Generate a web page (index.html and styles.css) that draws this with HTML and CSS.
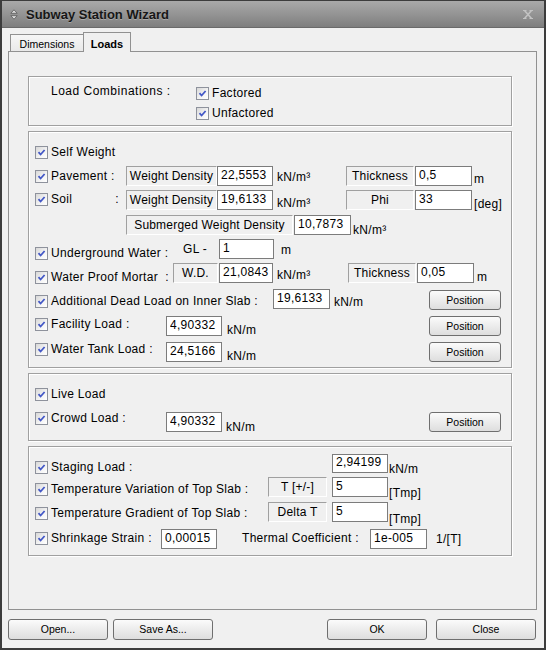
FILE: index.html
```html
<!DOCTYPE html>
<html>
<head>
<meta charset="utf-8">
<title>Subway Station Wizard</title>
<link rel="stylesheet" href="styles.css">
</head>
<body>
<div class="window">
  <div class="titlebar">
    <svg class="ticon" viewBox="0 0 8 11" width="8" height="11"><path d="M4 0.8 L7.2 4.3 H0.8 Z M4 10.2 L7.2 6.7 H0.8 Z" fill="#dcdcdc" stroke="#5a5a5a" stroke-width="0.8"/></svg>
    <span class="ttext">Subway Station Wizard</span>
    <svg class="tclose" viewBox="0 0 12 11" width="12" height="11"><path d="M2.5 1.5 L9.5 9.5 M9.5 1.5 L2.5 9.5" stroke="#c2c2c2" stroke-width="1.6"/><path d="M1 1.5 H4.5 M7.5 1.5 H11 M1 9.5 H4.5 M7.5 9.5 H11" stroke="#c2c2c2" stroke-width="1"/></svg>
  </div>

  <div class="tabs">
    <div class="tab">Dimensions</div>
    <div class="tab active">Loads</div>
  </div>

  <div class="panel">
    <div class="group g1">
      <div class="lc-label">Load Combinations :</div>
      <div class="lc-checks">
        <label class="cb"><span class="cbx"><svg viewBox="0 0 9 9"><path d="M1.5 4.2 L3.6 6.5 L7.6 2"/></svg></span>Factored</label>
        <label class="cb"><span class="cbx"><svg viewBox="0 0 9 9"><path d="M1.5 4.2 L3.6 6.5 L7.6 2"/></svg></span>Unfactored</label>
      </div>
    </div>

    <div class="group g2">
      <div class="row h20">
        <label class="cb"><span class="cbx"><svg viewBox="0 0 9 9"><path d="M1.5 4.2 L3.6 6.5 L7.6 2"/></svg></span>Self Weight</label>
      </div>
      <div class="row h24">
        <label class="cb t4 w91"><span class="cbx"><svg viewBox="0 0 9 9"><path d="M1.5 4.2 L3.6 6.5 L7.6 2"/></svg></span>Pavement :</label>
        <span class="lbox w91">Weight Density</span>
        <input class="field w56" value="22,5553" readonly>
        <span class="unit ml4 w69 t4">kN/m³</span>
        <span class="lbox w68">Thickness</span>
        <input class="field ml1 w57" value="0,5" readonly>
        <span class="unit ml2 t6">m</span>
      </div>
      <div class="row h25">
        <label class="cb t3 w91"><span class="cbx"><svg viewBox="0 0 9 9"><path d="M1.5 4.2 L3.6 6.5 L7.6 2"/></svg></span>Soil<span class="soil-colon">:</span></label>
        <span class="lbox w91">Weight Density</span>
        <input class="field w56" value="19,6133" readonly>
        <span class="unit ml4 w69 t6">kN/m³</span>
        <span class="lbox w68">Phi</span>
        <input class="field ml1 w57" value="33" readonly>
        <span class="unit ml2 t7">[deg]</span>
      </div>
      <div class="row h24">
        <span class="lbox ml91 w167">Submerged Weight Density</span>
        <input class="field ml1 w57" value="10,7873" readonly>
        <span class="unit ml2 t8">kN/m³</span>
      </div>
      <div class="row h24">
        <label class="cb t8 w148"><span class="cbx"><svg viewBox="0 0 9 9"><path d="M1.5 4.2 L3.6 6.5 L7.6 2"/></svg></span>Underground Water :</label>
        <span class="unit w36 t3">GL -</span>
        <input class="field w55" value="1" readonly>
        <span class="unit ml7 t4">m</span>
      </div>
      <div class="row h26">
        <label class="cb t8 w138"><span class="cbx"><svg viewBox="0 0 9 9"><path d="M1.5 4.2 L3.6 6.5 L7.6 2"/></svg></span>Water Proof Mortar&nbsp;&nbsp;:</label>
        <span class="lbox w45">W.D.</span>
        <input class="field ml1 w54" value="21,0843" readonly>
        <span class="unit ml4 w71 t5">kN/m³</span>
        <span class="lbox w68">Thickness</span>
        <input class="field ml1 w57" value="0,05" readonly>
        <span class="unit ml3 t7">m</span>
      </div>
      <div class="row h27">
        <label class="cb t6 w238"><span class="cbx"><svg viewBox="0 0 9 9"><path d="M1.5 4.2 L3.6 6.5 L7.6 2"/></svg></span>Additional Dead Load on Inner Slab :</label>
        <input class="field w57" value="19,6133" readonly>
        <span class="unit ml4 t6">kN/m</span>
        <button class="btn pos t1">Position</button>
      </div>
      <div class="row h26">
        <label class="cb t2 w131"><span class="cbx"><svg viewBox="0 0 9 9"><path d="M1.5 4.2 L3.6 6.5 L7.6 2"/></svg></span>Facility Load :</label>
        <input class="field w56" value="4,90332" readonly>
        <span class="unit ml5 t7">kN/m</span>
        <button class="btn pos">Position</button>
      </div>
      <div class="row h20">
        <label class="cb t1 w131"><span class="cbx"><svg viewBox="0 0 9 9"><path d="M1.5 4.2 L3.6 6.5 L7.6 2"/></svg></span>Water Tank Load :</label>
        <input class="field w56" value="24,5166" readonly>
        <span class="unit ml5 t7">kN/m</span>
        <button class="btn pos">Position</button>
      </div>
    </div>

    <div class="group g3">
      <div class="row h24">
        <label class="cb"><span class="cbx"><svg viewBox="0 0 9 9"><path d="M1.5 4.2 L3.6 6.5 L7.6 2"/></svg></span>Live Load</label>
      </div>
      <div class="row h20">
        <label class="cb w131"><span class="cbx"><svg viewBox="0 0 9 9"><path d="M1.5 4.2 L3.6 6.5 L7.6 2"/></svg></span>Crowd Load :</label>
        <input class="field w56" value="4,90332" readonly>
        <span class="unit ml4 t8">kN/m</span>
        <button class="btn pos">Position</button>
      </div>
    </div>

    <div class="group g4">
      <div class="row h23">
        <label class="cb t7 w297"><span class="cbx"><svg viewBox="0 0 9 9"><path d="M1.5 4.2 L3.6 6.5 L7.6 2"/></svg></span>Staging Load :</label>
        <input class="field w56 short" value="2,94199" readonly>
        <span class="unit ml1 t8">kN/m</span>
      </div>
      <div class="row h25">
        <label class="cb t6 w233"><span class="cbx"><svg viewBox="0 0 9 9"><path d="M1.5 4.2 L3.6 6.5 L7.6 2"/></svg></span>Temperature Variation of Top Slab :</label>
        <span class="lbox w59">T [+/-]</span>
        <input class="field ml5 w56" value="5" readonly>
        <span class="unit ml1 t9">[Tmp]</span>
      </div>
      <div class="row h27">
        <label class="cb t5 w233"><span class="cbx"><svg viewBox="0 0 9 9"><path d="M1.5 4.2 L3.6 6.5 L7.6 2"/></svg></span>Temperature Gradient of Top Slab :</label>
        <span class="lbox w59">Delta T</span>
        <input class="field ml5 w56" value="5" readonly>
        <span class="unit ml1 t10">[Tmp]</span>
      </div>
      <div class="row h20">
        <label class="cb t3 w126"><span class="cbx"><svg viewBox="0 0 9 9"><path d="M1.5 4.2 L3.6 6.5 L7.6 2"/></svg></span>Shrinkage Strain :</label>
        <input class="field w56" value="0,00015" readonly>
        <span class="unit ml25 w128 t2">Thermal Coefficient :</span>
        <input class="field w57" value="1e-005" readonly>
        <span class="unit ml9 t3">1/[T]</span>
      </div>
    </div>
  </div>

  <div class="footer">
    <button class="btn big">Open...</button>
    <button class="btn big ml5">Save As...</button>
    <button class="btn big ok">OK</button>
    <button class="btn big ml9">Close</button>
  </div>
</div>
</body>
</html>
```

FILE: styles.css
```css
html, body {
  margin: 0;
  padding: 0;
  background: #f0f0f0;
}

.window {
  width: 546px;
  height: 650px;
  box-sizing: border-box;
  border: 2px solid #3c3c3c;
  border-top-width: 1px;
  background: #f0f0f0;
  display: flex;
  flex-direction: column;
  font-family: "Liberation Sans", Arial, sans-serif;
  font-size: 12px;
  color: #000;
  overflow: hidden;
}

/* title bar */
.titlebar {
  height: 27px;
  flex: none;
  display: flex;
  align-items: center;
  padding: 0 10px 0 8px;
  background: linear-gradient(#a9a9a9, #929292 55%, #7e7e7e);
  border-bottom: 1px solid #6a6a6a;
  box-sizing: border-box;
}
.ticon { flex: none; }
.ttext {
  margin-left: 8px;
  font-weight: bold;
  font-size: 13px;
  color: #161616;
  text-shadow: 0 1px 0 rgba(255,255,255,0.25);
}
.tclose { margin-left: auto; flex: none; }

/* tabs */
.tabs {
  flex: none;
  display: flex;
  align-items: flex-end;
  padding: 4px 0 0 8px;
}
.tab {
  height: 17px;
  width: 74px;
  box-sizing: border-box;
  border: 1px solid #919191;
  border-bottom: none;
  background: linear-gradient(#f6f6f6, #e9e9e9);
  font-size: 10.5px;
  display: flex;
  justify-content: center;
  padding-top: 3px;
  line-height: 13px;
}
.tab.active {
  height: 20px;
  width: 48px;
  margin-left: -1px;
  margin-bottom: -1px;
  padding-top: 5px;
  background: #f0f0f0;
  font-weight: bold;
  font-size: 11px;
  position: relative;
  z-index: 1;
}

/* panel */
.panel {
  flex: none;
  margin-left: 6px;
  width: 529px;
  height: 559px;
  box-sizing: border-box;
  border: 1px solid #919191;
  padding: 24px 0 0 19px;
  display: flex;
  flex-direction: column;
  gap: 5px;
}

.group {
  width: 484px;
  box-sizing: border-box;
  border: 1px solid #a0a0a0;
  box-shadow: 1px 1px 0 #ffffff, inset 1px 1px 0 #ffffff;
}

.g1 {
  display: flex;
  align-items: flex-start;
  padding: 7px 0 5px 22px;
}
.lc-label {
  width: 145px;
  line-height: 14px;
  flex: none;
  letter-spacing: 0.5px;
}
.lc-checks {
  margin-top: 3px;
  display: flex;
  flex-direction: column;
  gap: 7px;
}

.g2 { padding: 14px 10px 5px 6px; }
.g3 { padding: 14px 10px 8px 6px; }
.g4 { padding: 7px 10px 6px 6px; }

.row {
  display: flex;
  align-items: flex-start;
}

/* checkbox */
.cb {
  display: flex;
  align-items: center;
  gap: 3px;
  height: 13px;
  line-height: 13px;
  flex: none;
  white-space: nowrap;
  letter-spacing: 0.3px;
}
.cbx {
  width: 13px;
  height: 13px;
  box-sizing: border-box;
  border: 1px solid #8e929c;
  background: linear-gradient(135deg, #d8d8d8, #f4f4f4 60%, #ffffff);
  display: flex;
  align-items: center;
  justify-content: center;
  flex: none;
}
.cbx svg {
  width: 9px;
  height: 9px;
}
.cbx path {
  fill: none;
  stroke: #4257c6;
  stroke-width: 1.8;
}
.soil-colon { margin-left: 40px; }

/* static label boxes */
.lbox {
  flex: none;
  height: 20px;
  box-sizing: border-box;
  border: 1px solid;
  border-color: #a0a0a0 #ffffff #ffffff #a0a0a0;
  display: flex;
  align-items: center;
  justify-content: center;
  white-space: nowrap;
  letter-spacing: 0.2px;
}

/* edit fields */
.field {
  flex: none;
  height: 20px;
  box-sizing: border-box;
  margin: 0;
  border: 1px solid #7c7c7c;
  border-radius: 0;
  background: #ffffff;
  padding: 0 2px 3px 3px;
  font-family: "Liberation Sans", Arial, sans-serif;
  font-size: 12px;
  letter-spacing: 0.3px;
  color: #000;
  outline: none;
}
.field.short { height: 19px; }

.unit {
  flex: none;
  line-height: 14px;
  white-space: nowrap;
  letter-spacing: 0.3px;
}

/* buttons */
.btn {
  flex: none;
  margin: 0;
  height: 21px;
  box-sizing: border-box;
  border: 1px solid #6f6f6f;
  border-radius: 3px;
  background: linear-gradient(#fbfbfb, #ececec 50%, #dedede);
  font-family: "Liberation Sans", Arial, sans-serif;
  font-size: 10.5px;
  color: #000;
  padding: 0;
  line-height: 19px;
}
.btn.pos {
  width: 72px;
  height: 20px;
  margin-left: auto;
  line-height: 18px;
}
.btn.big { width: 100px; }
.btn.ok { margin-left: auto; }

.footer {
  flex: none;
  display: flex;
  margin-top: 9px;
  padding: 0 8px 0 6px;
}

/* row heights */
.h20 { height: 20px; }
.h23 { height: 23px; }
.h24 { height: 24px; }
.h25 { height: 25px; }
.h26 { height: 26px; }
.h27 { height: 27px; }

/* vertical offsets within rows */
.t1 { margin-top: 1px; }
.t2 { margin-top: 2px; }
.t3 { margin-top: 3px; }
.t4 { margin-top: 4px; }
.t5 { margin-top: 5px; }
.t6 { margin-top: 6px; }
.t7 { margin-top: 7px; }
.t8 { margin-top: 8px; }
.t9 { margin-top: 9px; }
.t10 { margin-top: 10px; }

/* widths */
.w36 { width: 36px; }
.w45 { width: 45px; }
.w54 { width: 54px; }
.w55 { width: 55px; }
.w56 { width: 56px; }
.w57 { width: 57px; }
.w59 { width: 59px; }
.w68 { width: 68px; }
.w69 { width: 69px; }
.w71 { width: 71px; }
.w91 { width: 91px; }
.w126 { width: 126px; }
.w128 { width: 128px; }
.w131 { width: 131px; }
.w138 { width: 138px; }
.w148 { width: 148px; }
.w167 { width: 167px; }
.w233 { width: 233px; }
.w238 { width: 238px; }
.w297 { width: 297px; }

/* horizontal offsets */
.ml1 { margin-left: 1px; }
.ml2 { margin-left: 2px; }
.ml3 { margin-left: 3px; }
.ml4 { margin-left: 4px; }
.ml5 { margin-left: 5px; }
.ml7 { margin-left: 7px; }
.ml9 { margin-left: 9px; }
.ml25 { margin-left: 25px; }
.ml91 { margin-left: 91px; }
```
